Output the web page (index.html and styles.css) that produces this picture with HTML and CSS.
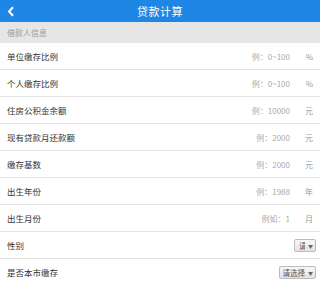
FILE: index.html
```html
<!DOCTYPE html>
<html lang="zh-CN">
<head>
    <meta charset="UTF-8">
    <meta name="viewport" content="width=device-width, initial-scale=1.0">
    <title>贷款计算</title>
    <link rel="stylesheet" href="styles.css">
</head>
<body>
    <div class="header">
        <span class="back">
            <svg width="8" height="11" viewBox="0 0 8 11"><path d="M6 1.2 L2 5.5 L6 9.8" fill="none" stroke="#fff" stroke-width="2"/></svg>
        </span>
        <h1>贷款计算</h1>
    </div>
    <div class="section">借款人信息</div>
    <div class="row">
        <label>单位缴存比例</label>
        <input type="text" placeholder="例：0~100">
        <span class="unit">%</span>
    </div>
    <div class="row">
        <label>个人缴存比例</label>
        <input type="text" placeholder="例：0~100">
        <span class="unit">%</span>
    </div>
    <div class="row">
        <label>住房公积金余额</label>
        <input type="text" placeholder="例：10000">
        <span class="unit">元</span>
    </div>
    <div class="row">
        <label>现有贷款月还款额</label>
        <input type="text" placeholder="例：2000">
        <span class="unit">元</span>
    </div>
    <div class="row">
        <label>缴存基数</label>
        <input type="text" placeholder="例：2000">
        <span class="unit">元</span>
    </div>
    <div class="row">
        <label>出生年份</label>
        <input type="text" placeholder="例：1988">
        <span class="unit">年</span>
    </div>
    <div class="row">
        <label>出生月份</label>
        <input type="text" placeholder="例如：1">
        <span class="unit">月</span>
    </div>
    <div class="row">
        <label>性别</label>
        <div class="select narrow"><span>请</span><i>▼</i></div>
    </div>
    <div class="row">
        <label>是否本市缴存</label>
        <div class="select"><span>请选择</span><i>▼</i></div>
    </div>
</body>
</html>
```
FILE: styles.css
```css
body {
    margin: 0;
    font-family: "Noto Sans CJK SC", "Liberation Sans", sans-serif;
    background: #fff;
    width: 320px;
}
.header {
    height: 22px;
    background: #1e87e5;
    display: flex;
    align-items: center;
    justify-content: center;
    position: relative;
}
.back {
    position: absolute;
    left: 7px;
    top: 0;
    height: 22px;
    display: flex;
    align-items: center;
}
.header h1 {
    margin: 0;
    color: #fff;
    font-size: 11px;
    font-weight: normal;
    letter-spacing: 0.5px;
}
.section {
    height: 21px;
    line-height: 21px;
    background: #e6e6e6;
    color: #999;
    font-size: 8px;
    padding-left: 7px;
}
.row {
    height: 26px;
    border-bottom: 1px solid #e2e2e2;
    display: flex;
    align-items: center;
    padding: 0 7px;
}
.row label {
    flex: 1;
    font-size: 8.5px;
    color: #333;
}
.row input {
    width: 90px;
    border: none;
    outline: none;
    text-align: right;
    font-family: inherit;
    font-size: 8px;
    padding: 0;
    color: #333;
    background: transparent;
}
.row input::placeholder {
    color: #aaa;
}
.unit {
    width: 23px;
    text-align: right;
    font-size: 8px;
    color: #999;
}
.select {
    display: flex;
    align-items: center;
    height: 11px;
    border: 1px solid #bbb;
    border-radius: 2px;
    background: linear-gradient(#f8f8f8, #e2e2e2);
    font-size: 7.5px;
    color: #555;
    padding: 0 2px;
    overflow: hidden;
    margin-right: -3px;
}
.select span {
    white-space: nowrap;
}
.select i {
    font-style: normal;
    font-size: 5px;
    margin-left: 3px;
    color: #666;
}
.select.narrow {
    width: 16px;
    justify-content: flex-end;
}
.select.narrow span {
    width: 6px;
    overflow: hidden;
}
```
